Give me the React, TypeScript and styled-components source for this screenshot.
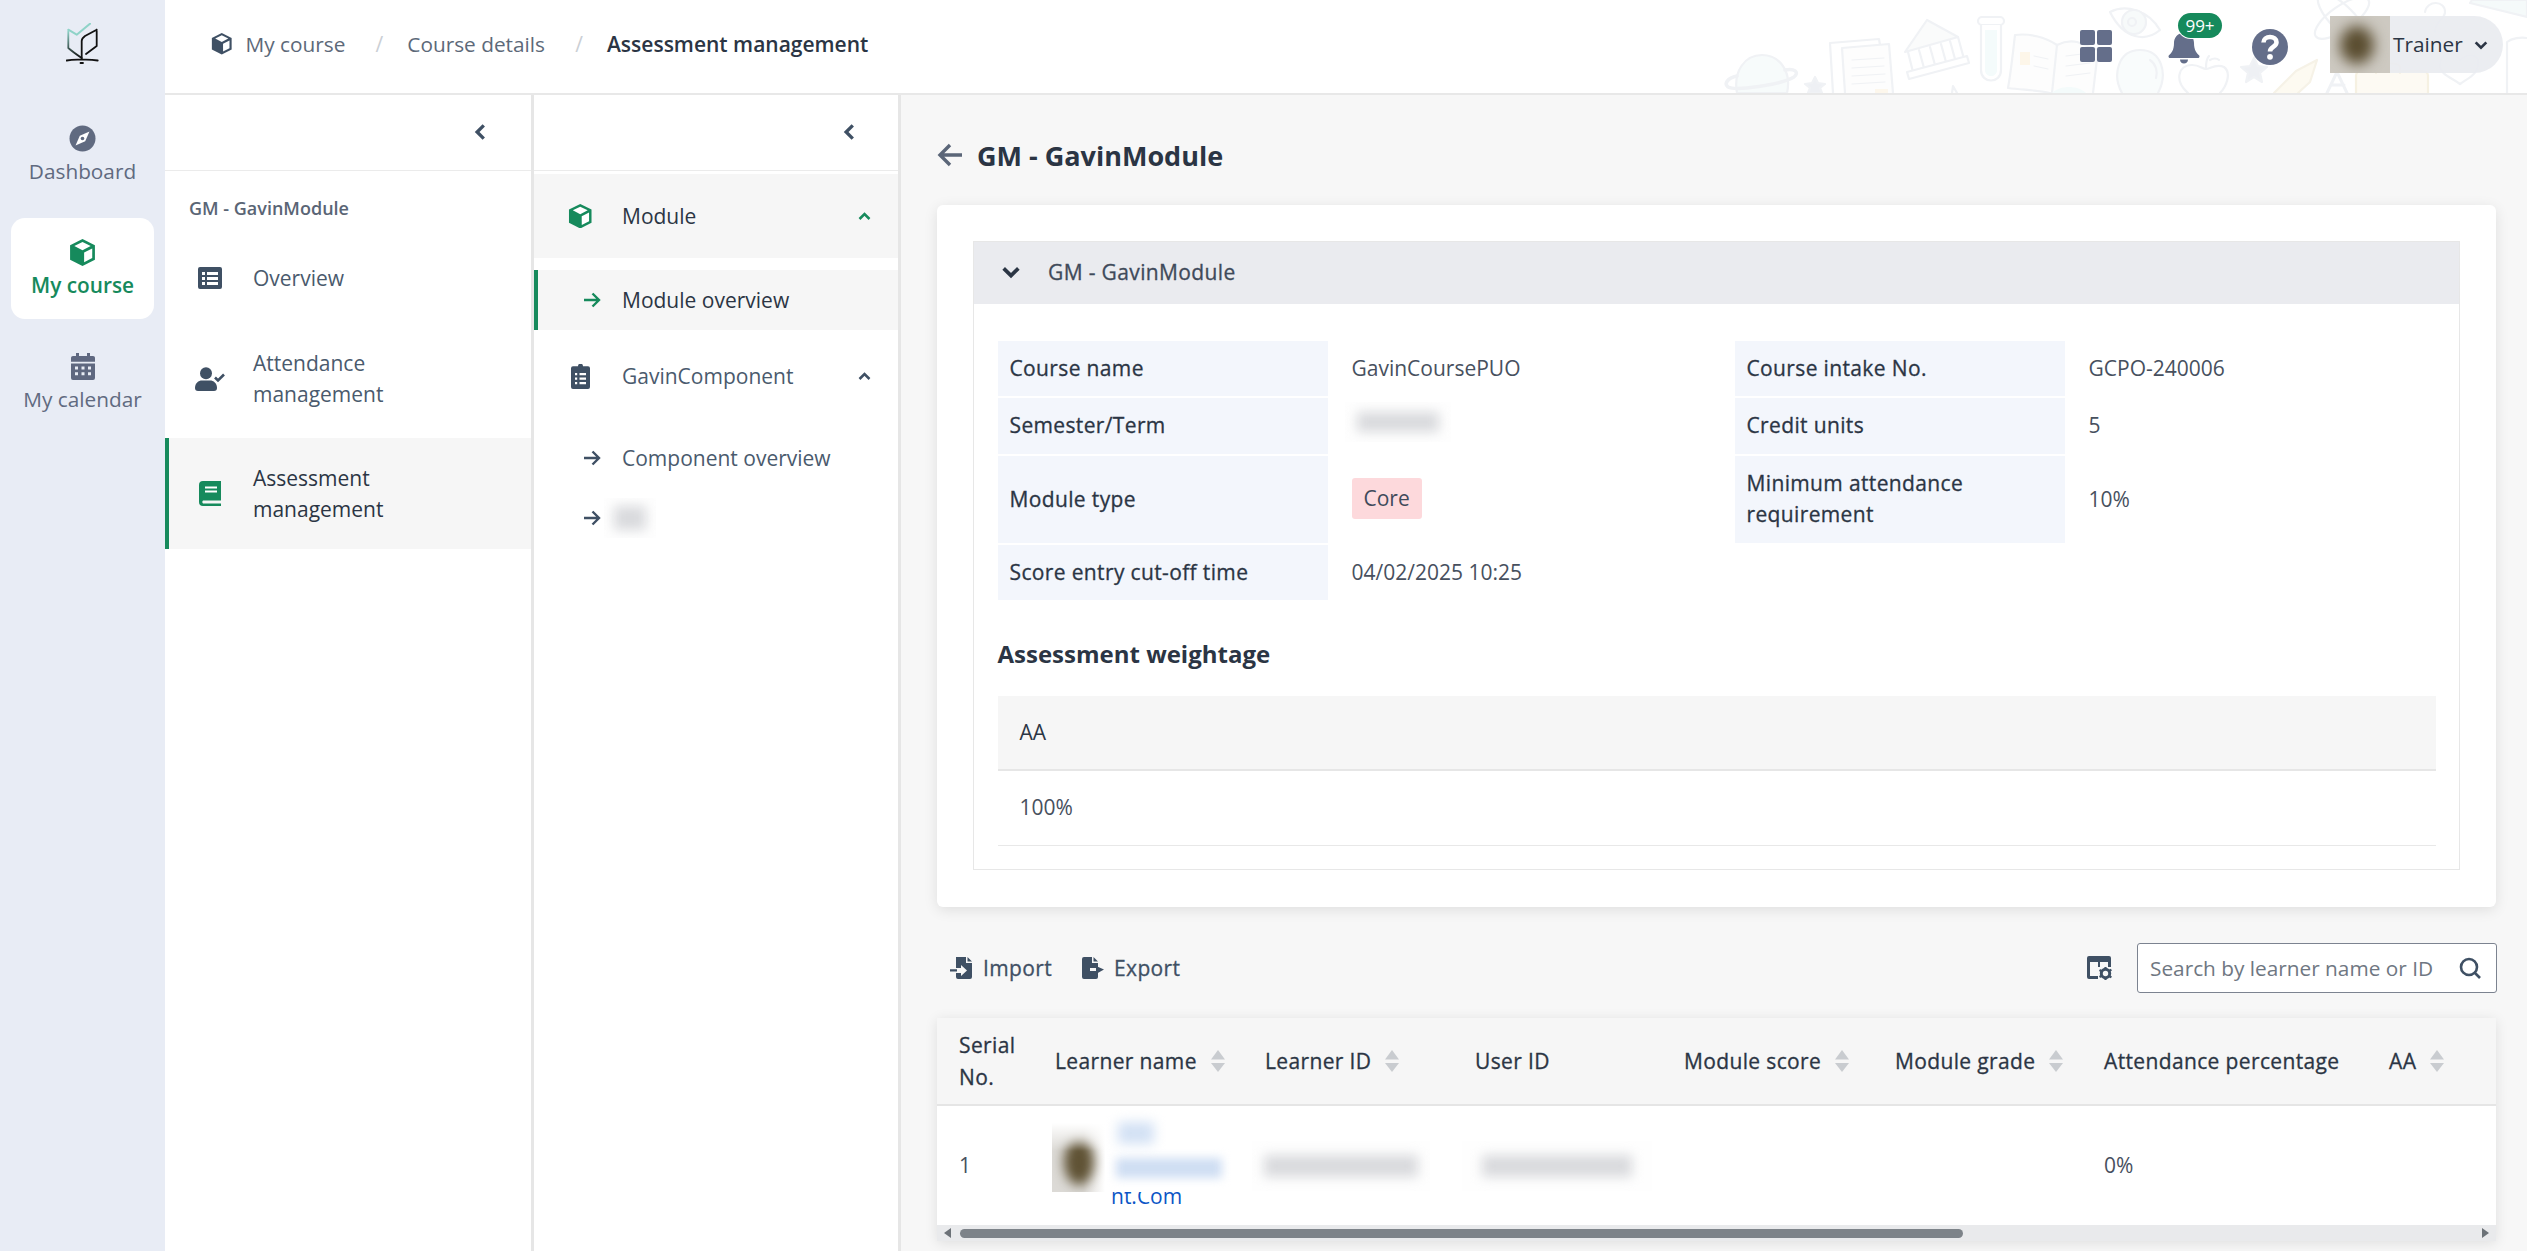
import React from "react";
import styled, { createGlobalStyle, css } from "styled-components";

const Global = createGlobalStyle`
  html, body { margin: 0; padding: 0; height: 100%; overflow: hidden; }
  body { font-family: "Open Sans", "Liberation Sans", sans-serif; font-size: 21px; line-height: 31px; color: #2b3544; background: #f7f7f7; }
  #root { height: 100%; }
  * { box-sizing: border-box; }
`;

const medium = css`
  font-weight: 400; letter-spacing: 0.36px; -webkit-text-stroke: 0.3px currentColor;
`;

const Page = styled.div`display: flex; width: 2527px; height: 1251px; overflow: hidden;`;

const Rail = styled.nav`
  width: 165px; flex: none; background: #e8ecf5; display: flex; flex-direction: column; align-items: center;
`;
const LogoBox = styled.div`height: 88px; margin-bottom: 16px; display: flex; align-items: center; justify-content: center; width: 100%;`;
const RailItem = styled.div<{ $active?: boolean }>`
  width: 143px; height: 101px; margin-bottom: 13px; border-radius: 14px; display: flex; flex-direction: column; align-items: center;
  padding-top: 21px; gap: 5px; font-size: 20.8px; line-height: 29px;
  background: ${p => (p.$active ? "#fff" : "transparent")};
  color: ${p => (p.$active ? "#168a5c" : "#606a80")};
  font-weight: ${p => (p.$active ? 600 : 400)};
`;

const Body = styled.div`flex: 1; min-width: 0; display: flex; flex-direction: column;`;
const Header = styled.header`
  position: relative; height: 95px; flex: none; background: #fff; border-bottom: 2px solid #e8e8e8; display: flex; align-items: center; padding-left: 46px; padding-bottom: 5px;
`;
const Doodles = styled.svg`position: absolute; right: 0; top: 0; width: 807px; height: 93px; pointer-events: none;`;
const Crumb = styled.span<{ $current?: boolean }>`
  display: inline-flex; align-items: center; gap: 13px; font-size: ${p => (p.$current ? "21px" : "20.8px")}; color: ${p => (p.$current ? "#2b3544" : "#5d6979")};
  font-weight: ${p => (p.$current ? 600 : 400)}; white-space: nowrap; position: relative;
`;
const Slash = styled.span`color: #cbcfd5; width: 62px; text-indent: 6px; text-align: center; flex: none;`;
const HeaderRight = styled.div`
  position: absolute; left: 1915px; top: 0; height: 93px; width: 448px; display: flex; align-items: center;
`;
const AppsGrid = styled.div`display: grid; grid-template-columns: 15px 15px; grid-template-rows: 15px 15px; gap: 2px; margin-right: 55px; margin-top: -1px;`;
const AppsCell = styled.span`background: #646e8a; border-radius: 2px;`;
const BellBox = styled.div`position: relative; width: 34px; height: 34px; margin-right: 51px;`;
const Badge = styled.span`
  position: absolute; left: 11px; top: -17px; width: 44px; height: 25px; border-radius: 13px; background: #168a5c; color: #fff;
  font-size: 17px; line-height: 25px; text-align: center; box-shadow: 0 0 0 1px #fff;
`;
const UserPill = styled.div`
  margin-left: 42px; width: 173px; height: 57px; border-radius: 0 29px 29px 0; background: rgba(233,235,240,.92); display: flex; align-items: center; position: relative; margin-top: -4px;
`;
const Avatar = styled.div`
  width: 60px; height: 57px; flex: none; overflow: hidden; background: #cdc9c1; position: relative;
  &::after { content: ""; position: absolute; left: 10px; top: 10px; width: 34px; height: 38px; border-radius: 50%; background: #5a4d30; filter: blur(7px); }
`;
const UserName = styled.span`margin-left: 3px; font-size: 20.8px; color: #2b3544;`;
const UserChevron = styled.span`display: flex; margin-left: 10px;`;

const Columns = styled.div`flex: 1; min-height: 0; display: flex;`;
const SidePanel = styled.aside<{ $w: number }>`
  width: ${p => p.$w}px; flex: none; background: #fff; border-right: 3px solid #e6e6e6; display: flex; flex-direction: column;
`;
const PanelTop = styled.div`
  height: 76px; flex: none; border-bottom: 1.5px solid #ebebeb; display: flex; align-items: center; justify-content: flex-end;
`;
const Collapse = styled.span<{ $r: number }>`display: flex; margin-right: ${p => p.$r}px; margin-top: -2px;`;
const ModuleCaption = styled.div`
  font-size: 18px; font-weight: 600; color: #5a6575; padding-left: 24px; margin-top: 22px; line-height: 30px; margin-bottom: 25px;
`;
const NavRow = styled.div<{ $active?: boolean; $h: number; $mb: number }>`
  display: flex; align-items: center; height: ${p => p.$h}px; margin-bottom: ${p => p.$mb}px;
  padding-left: ${p => (p.$active ? "23px" : "27px")};
  border-left: ${p => (p.$active ? "4px solid #168a5c" : "0")};
  background: ${p => (p.$active ? "#f6f6f6" : "transparent")};
  color: ${p => (p.$active ? "#2b3544" : "#4a5a6d")};
`;
const NavIcon = styled.span`width: 36px; margin-right: 25px; display: flex; justify-content: center; flex: none;`;
const NavLabel = styled.span`width: 230px;`;

const TreeHead = styled.div<{ $active?: boolean; $mt: number; $mb: number }>`
  display: flex; align-items: center; height: 84px; margin-top: ${p => p.$mt}px; margin-bottom: ${p => p.$mb}px; padding-left: 33px;
  background: ${p => (p.$active ? "#f6f6f6" : "transparent")};
  color: ${p => (p.$active ? "#2b3544" : "#4a5a6d")};
`;
const TreeIcon = styled.span`width: 26px; margin-right: 29px; display: flex; justify-content: center; flex: none;`;
const TreeLabel = styled.span`flex: 1;`;
const TreeChevron = styled.span`display: flex; margin-right: 26px;`;
const TreeLeaf = styled.div<{ $active?: boolean }>`
  display: flex; align-items: center; height: 60px;
  padding-left: ${p => (p.$active ? "45px" : "49px")};
  border-left: ${p => (p.$active ? "4px solid #168a5c" : "0")};
  background: ${p => (p.$active ? "#f6f6f6" : "transparent")};
  color: ${p => (p.$active ? "#2b3544" : "#4a5a6d")};
`;
const LeafArrow = styled.span`width: 18px; margin-right: 21px; display: flex; flex: none;`;

const BlurPatch = styled.span<{ $w: number; $h: number; $inY: number; $inX: number; $ml?: number; $mt?: number }>`
  display: inline-block; width: ${p => p.$w}px; height: ${p => p.$h}px; position: relative; overflow: hidden; flex: none; background: #fefefe;
  margin-left: ${p => p.$ml ?? 0}px; margin-top: ${p => p.$mt ?? 0}px;
  &::after { content: ""; position: absolute; inset: ${p => p.$inY}px ${p => p.$inX}px; background: #d9dadd; filter: blur(6px); }
`;

const Main = styled.main`flex: 1; min-width: 0; padding: 0 31px 0 36px; background: #f7f7f7; overflow: hidden;`;
const TitleRow = styled.div`height: 110px; padding-top: 10px; display: flex; align-items: center; gap: 14px; font-size: 27px; font-weight: 700; color: #2b3544;`;
const Card = styled.section`
  background: #fff; border-radius: 6px; height: 702px; padding: 36px 36px 37px; box-shadow: 0 3px 14px rgba(0,0,0,.1);
`;
const Accordion = styled.div`border: 1.5px solid #e7e7e7; height: 100%; display: flex; flex-direction: column;`;
const AccordionHead = styled.div`
  height: 62px; flex: none; background: #eaebef; display: flex; align-items: center; padding: 0 0 2px 26px; gap: 26px; color: #3f4a5a; ${medium}
`;
const AccordionBody = styled.div`padding: 36.5px 23.5px 0;`;
const InfoGrid = styled.div`display: grid; grid-template-columns: 330px 407px 330px 1fr; grid-template-rows: 55px 56px 87px 55px; row-gap: 2px;`;
const InfoLabel = styled.div`background: #f3f6fc; padding: 0 12px; display: flex; align-items: center; color: #2b3544; ${medium}`;
const InfoValue = styled.div`padding: 0 24px; display: flex; align-items: center; color: #47505e;`;
const Tag = styled.span`background: #fdd9dc; color: #3f4a5a; border-radius: 3px; height: 41px; padding: 0 12px; display: inline-flex; align-items: center; margin-top: -2px;`;
const Subhead = styled.h3`margin: 38px 0 26px; font-size: 24px; line-height: 32px; font-weight: 700; color: #2b3544;`;
const WeightHead = styled.div`height: 75px; background: #f6f6f6; border-bottom: 2px solid #e6e6e6; padding-left: 22px; display: flex; align-items: center; color: #2b3544; font-weight: 400;`;
const WeightCell = styled.div`height: 75px; border-bottom: 1.5px solid #e8e8e8; padding-left: 22px; display: flex; align-items: center; color: #47505e;`;

const Toolbar = styled.div`height: 111px; display: flex; align-items: center; padding-top: 11px;`;
const ToolButton = styled.span`display: inline-flex; align-items: center; gap: 10px; color: #3f5064; margin-left: 13px; margin-right: 17px; ${medium}`;
const Spacer = styled.span`flex: 1;`;
const SearchBox = styled.div`
  width: 360px; height: 50px; border: 1.5px solid #7c8390; border-radius: 3px; background: #fff; display: flex; align-items: center; padding: 0 14px 0 12px; margin-left: 25px; margin-right: -1px; color: #6f7782; justify-content: space-between; font-size: 20.8px;
`;
const TableWrap = styled.div`background: #fff; box-shadow: 0 2px 12px rgba(0,0,0,.1); height: 223px; display: flex; flex-direction: column; overflow: hidden;`;
const Grid = styled.div`display: grid; grid-template-columns: 96px 210px 210px 209px 211px 209px 285px 130px;`;
const HeadRow = styled(Grid)`height: 88px; background: #f6f6f6; border-bottom: 2px solid #e5e5e5;`;
const BodyRow = styled(Grid)`height: 119px; flex: none;`;
const Th = styled.div`padding-left: 22px; display: flex; align-items: center; gap: 14px; color: #2b3544; line-height: 32px; ${medium}`;
const Td = styled.div`padding-left: 22px; display: flex; align-items: center; color: #47505e;`;
const BlurCell = styled.div`padding-left: 9px; display: flex; align-items: center;`;
const LearnerCell = styled.div`position: relative;`;
const LearnerLink = styled.a`position: absolute; left: 78px; bottom: 13px; color: #0b55c6; text-decoration: none;`;
const Cover = styled.span`position: absolute; left: 19px; top: 4px; width: 186px; height: 82px; background: #fff; overflow: hidden;`;
const CoverPhoto = styled.span`position: absolute; left: 0; top: 13px; width: 53px; height: 69px; background: linear-gradient(to right, #dcdad6 60%, #fff 100%); overflow: hidden;
  &::before { content: ""; position: absolute; left: 0; top: 0; right: 0; height: 28px; background: linear-gradient(to bottom, #fff, rgba(255,255,255,0)); z-index: 1; }
  &::after { content: ""; position: absolute; left: 12px; top: 16px; width: 30px; height: 46px; border-radius: 50%; background: #5f5234; filter: blur(6px); }`;
const CoverText = styled.span`position: absolute; left: 60px; top: 0; width: 120px; height: 82px;
  &::before { content: ""; position: absolute; left: 6px; top: 12px; width: 36px; height: 22px; background: #d3e1f4; filter: blur(6px); }
  &::after { content: ""; position: absolute; left: 4px; top: 48px; width: 106px; height: 20px; background: #cfdef3; filter: blur(5px); }`;
const ScrollTrack = styled.div`height: 16px; background: #e9eaec; position: relative; display: flex; align-items: center; justify-content: space-between; padding: 0 7px;`;
const ScrollThumb = styled.span`position: absolute; left: 23px; top: 4px; height: 9px; width: 1003px; background: #7d8389; border-radius: 5px;`;
const ScrollArrow = styled.svg`width: 8px; height: 10px; flex: none; fill: #6c7278;`;

const Cube = ({ c, s = 24 }: { c: string; s?: number }) => (
  <svg width={s} height={s} viewBox="1.5 0.5 23 25"><path fill={c} d="M13 0.5 24.5 6.2V19.6L13 25.5 1.5 19.6V6.2Z" /><path fill="#fff" d="M13 3.2 20.6 7 13 10.9 5.4 7Z" /><path fill="#fff" d="M14.5 13 22 9.2V18.2L14.5 22Z" /></svg>
);
const Chevron = ({ d, c = "#3f5064", s = 18, w = 3 }: { d: "left" | "up" | "down"; c?: string; s?: number; w?: number }) => {
  const p = d === "left" ? "M11.5 3 5.5 9l6 6" : d === "up" ? "M3 12l6-6 6 6" : "M3 6l6 6 6-6";
  return <svg width={s} height={s} viewBox="0 0 18 18" fill="none" stroke={c} strokeWidth={w}><path d={p} /></svg>;
};
const Arrow = ({ c }: { c: string }) => (
  <svg width="18" height="18" viewBox="0 0 18 18" fill="none" stroke={c} strokeWidth="2.4"><path d="M1 9h15M9.5 2.5 16 9l-6.5 6.5" /></svg>
);
const SortIcon = () => (
  <svg width="14" height="22" viewBox="0 0 14 22"><path fill="#c9ccd0" d="M7 0 14 9.5H0Z" /><path fill="#c9ccd0" d="M0 13h14l-7 9Z" /></svg>
);

const LogoIcon = () => (
  <svg width="33" height="42" viewBox="0 0 33 42" fill="none" strokeLinecap="round" strokeLinejoin="round">
    <defs><linearGradient id="lg" x1="0" y1="0" x2="0" y2="1"><stop offset="0" stopColor="#8fd3c8" /><stop offset="1" stopColor="#111" /></linearGradient></defs>
    <path d="M2.3 8v17c4 3.5 9 7 13.4 10" stroke="url(#lg)" strokeWidth="1.8" />
    <path d="M2.3 6.7l8.4 5L24 .7" stroke="#8fd3c8" strokeWidth="2" />
    <path d="M30.7 6.700 19 13c-2 1.500-3.300 3-3.300 5v18M30.700 6.700V23L20 31" stroke="#111" strokeWidth="1.800" />
    <path d="M.7 37.500c5-1 10-1 15-.8 5-.2 10-.2 16 .8M14.500 40h2.500" stroke="#111" strokeWidth="1.800" />
  </svg>
);
const Compass = () => (
  <svg width="27" height="27" viewBox="0 0 27 27"><circle cx="13.5" cy="13.5" r="13" fill="#606a80" /><path fill="#fff" d="M20.5 6.5 16.2 16.2 6.5 20.5 10.8 10.8Z" /><circle cx="13.5" cy="13.5" r="1.8" fill="#606a80" /></svg>
);
const Calendar = () => (
  <svg width="24" height="27" viewBox="0 0 24 28" preserveAspectRatio="none"><path fill="#5f6880" d="M5 0h3v3h8V0h3v3h3a2 2 0 0 1 2 2v4H0V5a2 2 0 0 1 2-2h3Z" /><path fill="#5f6880" fillRule="evenodd" d="M0 11h24v15a2 2 0 0 1-2 2H2a2 2 0 0 1-2-2ZM4 14v3h3v-3Zm6.500 0v3h3v-3ZM17 14v3h3v-3ZM4 20v3h3v-3Zm6.500 0v3h3v-3ZM17 20v3h3v-3Z" /></svg>
);
const ListAlt = () => (
  <svg width="24" height="22" viewBox="0 0 24 22"><path fill="#3f5064" fillRule="evenodd" d="M2 0h20a2 2 0 0 1 2 2v18a2 2 0 0 1-2 2H2a2 2 0 0 1-2-2V2a2 2 0 0 1 2-2Zm2 5v3h3V5Zm5 0v3h11V5Zm-5 5v3h3v-3Zm5 0v3h11v-3Zm-5 5v3h3v-3Zm5 0v3h11v-3Z" /></svg>
);
const UserCheck = () => (
  <svg width="30" height="24" viewBox="0 0 30 24"><circle cx="11" cy="6.2" r="6" fill="#3f5064" /><path fill="#3f5064" d="M0 21c0-5 3.500-7.500 7-7.500h8c3.500 0 7 2.500 7 7.500 0 2-1 3-3 3H3c-2 0-3-1-3-3Z" /><path fill="none" stroke="#3f5064" strokeWidth="2.6" d="M20 10.500l3 3 6-6" /></svg>
);
const BookIcon = () => (
  <svg width="22" height="25" viewBox="0 0 22 25"><path fill="#168a5c" d="M4 0h18v19.500H4a2 2 0 0 0 0 3h18V25H4a4 4 0 0 1-4-4V4a4 4 0 0 1 4-4Z" /><path stroke="#fff" strokeWidth="2" d="M6 6.500h12M6 10.500h12" /></svg>
);
const Clipboard = () => (
  <svg width="19" height="25" viewBox="0 0 19 25"><path fill="#3f5064" fillRule="evenodd" d="M7 2.200a2.500 2.500 0 0 1 5 0h5a2 2 0 0 1 2 2V23a2 2 0 0 1-2 2H2a2 2 0 0 1-2-2V4.200a2 2 0 0 1 2-2ZM4 9v2.200h2.200V9Zm4.500 0v2.200H15V9ZM4 13.500v2.200h2.200v-2.200Zm4.500 0v2.200H15v-2.200ZM4 18v2.200h2.200V18Zm4.500 0v2.200H15V18Z" /></svg>
);
const BackArrow = () => (
  <svg width="26" height="24" viewBox="0 0 26 24" fill="none" stroke="#5b6678" strokeWidth="3.4"><path d="M25 12H3M13 2 3 12l10 10" /></svg>
);
const ImportIcon = () => (
  <svg width="23" height="22" viewBox="0 0 23 22"><path fill="#3f5064" fillRule="evenodd" d="M6 0h10v6h6v14a2 2 0 0 1-2 2H8a2 2 0 0 1-2-2v-4h5v3l6-5.500L11 8v3H6V2Z" /><path fill="#3f5064" d="M17.500 0 22 4.600h-4.500ZM0 12.200h7v2.400H0Z" /></svg>
);
const ExportIcon = () => (
  <svg width="22" height="22" viewBox="0 0 22 22"><path fill="#3f5064" d="M0 2a2 2 0 0 1 2-2h8v6h6v5H8v3h8v6a2 2 0 0 1-2 2H2a2 2 0 0 1-2-2Z" /><path fill="#3f5064" d="M11.500 0 16 4.600h-4.500ZM14 9l8 3.500-8 4.500Z" /></svg>
);
const ColumnsGear = () => (
  <svg width="25" height="24" viewBox="0 0 25 24"><path fill="#3f5064" fillRule="evenodd" d="M2 0h20a2 2 0 0 1 2 2v9h-3V6h-8v5h-2V6H3v14h8v3H2a2 2 0 0 1-2-2V2a2 2 0 0 1 2-2Z" /><circle cx="18.500" cy="17.500" r="4.200" fill="none" stroke="#3f5064" strokeWidth="3" /><path stroke="#3f5064" strokeWidth="2.200" d="M18.500 11v2.500M18.500 21.500V24M12.500 14l2.400 1.400M22 20l2.400 1.400M12.500 21l2.400-1.400M22 15l2.400-1.400" /></svg>
);
const SearchIcon = () => (
  <svg width="23" height="23" viewBox="0 0 23 23" fill="none" stroke="#3f5064" strokeWidth="2.600"><circle cx="10" cy="10" r="8" /><path d="M15.500 15.500 21 21" /></svg>
);
const Bell = () => (
  <svg width="34" height="34" viewBox="0 0 34 34"><path fill="#646e8a" d="M15 1.500a2 2 0 0 1 4 0V3c5 1 8 5 8 10 0 7 2.500 10 5.200 12.600.6.7.2 2.400-1.200 2.400H3c-1.400 0-1.800-1.700-1.200-2.400C4.500 23 7 20 7 13c0-5 3-9 8-10ZM13 29.500h8c0 2.500-1.800 4-4 4s-4-1.500-4-4Z" /></svg>
);
const Help = () => (
  <svg width="36" height="36" viewBox="0 0 36 36"><circle cx="18" cy="18" r="18" fill="#646e8a" /><path fill="none" stroke="#fff" strokeWidth="4.600" d="M11.500 13.500c0-3.500 3-5.500 6.500-5.500s6.500 2 6.500 5.200c0 4.800-6.500 4.600-6.500 9.300" /><circle cx="18" cy="27.800" r="2.900" fill="#fff" /></svg>
);

const DoodleArt = () => (
  <Doodles viewBox="1720 0 807 93" fill="none" stroke="#f0f2f5" strokeWidth="2.2" strokeLinejoin="round" strokeLinecap="round">
    <path d="M1737 93c-4-22 8-38 25-38 17 0 30 16 25 38Z" fill="#f7fbfb" />
    <path d="M1737 76c-10 2-13 8-9 11 8 4 52-2 66-10 6-5 0-9-9-7" strokeWidth="3.5" />
    <path d="M1815 77l3 6 7 1-5 4 2 5h-14l2-5-5-4 7-1Z" fill="#eef0f4" />
    <path d="M1833 93 1830 43l49-4 1 6" />
    <path d="M1845 93 1842 48l47-4 4 49" fill="#fdfdfd" />
    <path d="M1852 60l32-2M1852 68l32-2M1852 76l33-2M1852 84l33-2" strokeWidth="1" />
    <rect x="1875" y="89" width="13" height="4" fill="#fdf7ec" stroke="none" />
    <path d="M1927 20l31 17-53 15Z" fill="#fafbfb" />
    <path d="M1908 52l5 20M1958 37l6 22M1919 50l5 18M1930 47l5 18M1941 44l5 18M1950 41l5 18" />
    <path d="M1907 72l60-16 2 7-60 16Z" fill="#fff" />
    <path d="M1952 93l1-7 4 7" />
    <rect x="1978" y="17" width="26" height="8" rx="4" />
    <path d="M1981 25v45c0 14 20 14 20 0V25" fill="#fff" />
    <path d="M1985 30h12v40c0 8-12 8-12 0Z" fill="#f4fbfb" stroke="none" />
    <path d="M2008 88c3-16 5-36 7-53 14-2 30 2 42 10 4-2 10-5 20-3l21 8-5 43M2008 88c16 2 30 2 42 5" fill="#fdfdfd" />
    <path d="M2057 45l-5 48" />
    <rect x="2020" y="52" width="10" height="13" fill="#fdf6e9" stroke="none" />
    <path d="M2034 56l14 3M2034 66l14 3M2066 56l24-3M2066 66l24-3M2066 76l24-3" strokeWidth="1" />
    <path d="M2052 93c8-8 26-8 34 0" fill="#f4fbfb" stroke="none" />
    <path d="M2110 12c16-8 38-2 50 18-14 12-36 10-50-18Z" />
    <circle cx="2134" cy="22" r="12" fill="#f7fafa" />
    <circle cx="2132" cy="22" r="4" />
    <path d="M2122 93c-10-18-4-43 18-43 22 0 28 24 18 43" fill="#f9fcfc" />
    <path d="M2150 60c6 4 8 12 6 18" />
    <path d="M2188 93c-14-12-10-28 4-28 8 0 10 4 14 4 4 0 10-6 18-2 8 6 2 20-4 26" />
    <path d="M2206 68c0-6 1-10 3-12M2210 60c3-2 7-2 9 0" />
    <path d="M2254 58l4 8 9 1-7 6 2 9-8-5-8 5 2-9-7-6 9-1Z" fill="#eef0f4" />
    <path d="M2274 93l22-22 21-11-7 22-12 11" fill="#fdfaf1" stroke="#f6f2e7" />
    <path d="M2327 93l10-21 10 21M2331 85h13" strokeWidth="3" />
    <path d="M2356 93V76c0-4 3-5 6-5h60c3 0 6 1 6 5v17" fill="#fdfaf3" stroke="#f6f1e2" />
    <path d="M2376 73V67c0-5 24-5 24 0v6" stroke="#f6f1e2" />
    <ellipse cx="2342" cy="18" rx="32" ry="12" transform="rotate(45 2342 18)" />
    <ellipse cx="2342" cy="18" rx="32" ry="12" transform="rotate(-35 2342 18)" />
    <path d="M2425 12c2-12 20-12 20 0 0 8-10 8-10 20M2434 40v.5" />
    <path d="M2460 60c-6-10-20-8-20 6 0 8 12 12 20 18 8-6 20-10 18-24-2-6-12-6-18 0Z" />
    <path d="M2470 3l57 14V0h-55Z" fill="#f5fafa" />
    <path d="M2507 93V42c5-4 14-5 20-4" />
  </Doodles>
);

export default function App() {
  return (
    <Page>
      <Global />
      <Rail>
        <LogoBox><LogoIcon /></LogoBox>
        <RailItem><Compass />Dashboard</RailItem>
        <RailItem $active><Cube c="#168a5c" s={27} />My course</RailItem>
        <RailItem><Calendar />My calendar</RailItem>
      </Rail>
      <Body>
        <Header>
          <DoodleArt />
          <Crumb><Cube c="#3f5064" s={21.5} />My course</Crumb>
          <Slash>/</Slash>
          <Crumb>Course details</Crumb>
          <Slash>/</Slash>
          <Crumb $current>Assessment management</Crumb>
          <HeaderRight>
            <AppsGrid>{[0, 1, 2, 3].map(i => <AppsCell key={i} />)}</AppsGrid>
            <BellBox><Bell /><Badge>99+</Badge></BellBox>
            <Help />
            <UserPill>
              <Avatar />
              <UserName>Trainer</UserName>
              <UserChevron><Chevron d="down" c="#2b3544" s={16} /></UserChevron>
            </UserPill>
          </HeaderRight>
        </Header>
        <Columns>
          <SidePanel $w={369}>
            <PanelTop><Collapse $r={40}><Chevron d="left" s={20} /></Collapse></PanelTop>
            <ModuleCaption>GM - GavinModule</ModuleCaption>
            <NavRow $h={60} $mb={15}><NavIcon><ListAlt /></NavIcon><NavLabel>Overview</NavLabel></NavRow>
            <NavRow $h={111} $mb={4}><NavIcon><UserCheck /></NavIcon><NavLabel>Attendance management</NavLabel></NavRow>
            <NavRow $active $h={111} $mb={0}><NavIcon><BookIcon /></NavIcon><NavLabel>Assessment management</NavLabel></NavRow>
          </SidePanel>
          <SidePanel $w={367}>
            <PanelTop><Collapse $r={38}><Chevron d="left" s={20} /></Collapse></PanelTop>
            <TreeHead $active $mt={3} $mb={12}><TreeIcon><Cube c="#168a5c" s={24.5} /></TreeIcon><TreeLabel>Module</TreeLabel><TreeChevron><Chevron d="up" c="#168a5c" s={15} /></TreeChevron></TreeHead>
            <TreeLeaf $active><LeafArrow><Arrow c="#168a5c" /></LeafArrow>Module overview</TreeLeaf>
            <TreeHead $mt={4} $mb={10}><TreeIcon><Clipboard /></TreeIcon><TreeLabel>GavinComponent</TreeLabel><TreeChevron><Chevron d="up" s={15} /></TreeChevron></TreeHead>
            <TreeLeaf><LeafArrow><Arrow c="#3f5064" /></LeafArrow>Component overview</TreeLeaf>
            <TreeLeaf><LeafArrow><Arrow c="#3f5064" /></LeafArrow><BlurPatch $w={52} $h={40} $inY={8} $inX={10} $ml={-18} /></TreeLeaf>
          </SidePanel>
          <Main>
            <TitleRow><BackArrow />GM - GavinModule</TitleRow>
            <Card>
              <Accordion>
                <AccordionHead><Chevron d="down" c="#2b3544" s={22} />GM - GavinModule</AccordionHead>
                <AccordionBody>
                  <InfoGrid>
                    <InfoLabel>Course name</InfoLabel><InfoValue>GavinCoursePUO</InfoValue>
                    <InfoLabel>Course intake No.</InfoLabel><InfoValue>GCPO-240006</InfoValue>
                    <InfoLabel>Semester/Term</InfoLabel><InfoValue><BlurPatch $w={106} $h={40} $inY={10} $inX={12} $ml={-7} $mt={-8} /></InfoValue>
                    <InfoLabel>Credit units</InfoLabel><InfoValue>5</InfoValue>
                    <InfoLabel>Module type</InfoLabel><InfoValue><Tag>Core</Tag></InfoValue>
                    <InfoLabel>Minimum attendance requirement</InfoLabel><InfoValue>10%</InfoValue>
                    <InfoLabel>Score entry cut-off time</InfoLabel><InfoValue>04/02/2025 10:25</InfoValue>
                  </InfoGrid>
                  <Subhead>Assessment weightage</Subhead>
                  <WeightHead>AA</WeightHead>
                  <WeightCell>100%</WeightCell>
                </AccordionBody>
              </Accordion>
            </Card>
            <Toolbar>
              <ToolButton><ImportIcon />Import</ToolButton>
              <ToolButton><ExportIcon />Export</ToolButton>
              <Spacer />
              <ColumnsGear />
              <SearchBox>Search by learner name or ID<SearchIcon /></SearchBox>
            </Toolbar>
            <TableWrap>
              <HeadRow>
                <Th>Serial No.</Th>
                <Th>Learner name<SortIcon /></Th>
                <Th>Learner ID<SortIcon /></Th>
                <Th>User ID</Th>
                <Th>Module score<SortIcon /></Th>
                <Th>Module grade<SortIcon /></Th>
                <Th>Attendance percentage</Th>
                <Th>AA<SortIcon /></Th>
              </HeadRow>
              <BodyRow>
                <Td>1</Td>
                <LearnerCell>
                  <LearnerLink href="#">nt.Com</LearnerLink>
                  <Cover><CoverPhoto /><CoverText /></Cover>
                </LearnerCell>
                <BlurCell><BlurPatch $w={178} $h={50} $inY={14} $inX={12} /></BlurCell>
                <BlurCell><BlurPatch $w={190} $h={50} $inY={14} $inX={20} /></BlurCell>
                <Td /><Td />
                <Td>0%</Td>
                <Td />
              </BodyRow>
              <ScrollTrack>
                <ScrollArrow viewBox="0 0 8 10"><path d="M7 0v10L0 5Z" /></ScrollArrow>
                <ScrollThumb />
                <ScrollArrow viewBox="0 0 8 10"><path d="M1 0v10l7-5Z" /></ScrollArrow>
              </ScrollTrack>
            </TableWrap>
          </Main>
        </Columns>
      </Body>
    </Page>
  );
}
